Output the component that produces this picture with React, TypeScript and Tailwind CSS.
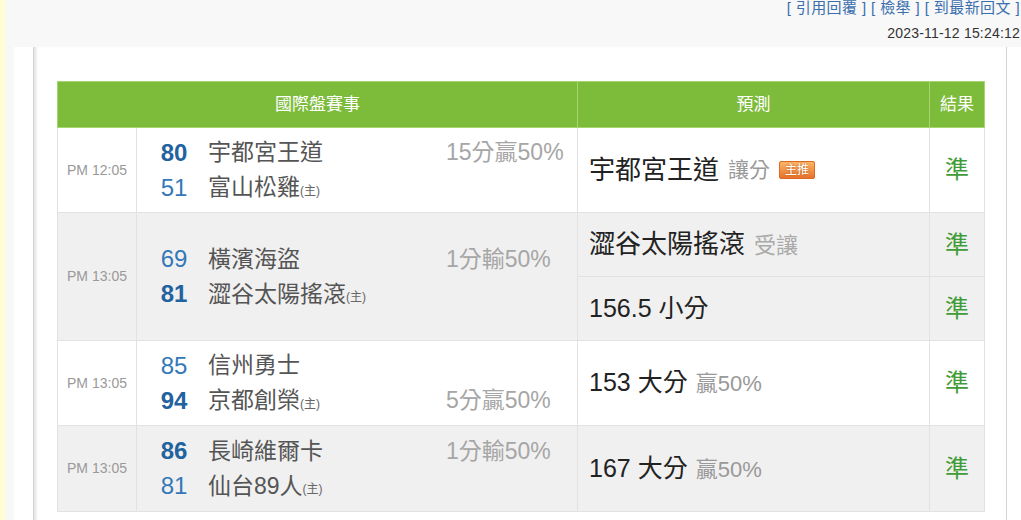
import React from "react";

const FONT = "font-['Liberation_Sans','Noto_Sans_CJK_TC',sans-serif]";

type Line = { score: string; bold: boolean; name: string; home?: boolean; hc?: string };

function Teams({ lines }: { lines: Line[] }) {
  return (
    <div className="flex flex-col pl-[12px] pr-[13px]">
      {lines.map((l, i) => (
        <div key={i} className="flex items-center h-[35px]">
          <div
            className={
              "w-[50px] text-center text-[24px] " +
              (l.bold ? "font-bold text-[#22629e]" : "text-[#3478b8]")
            }
          >
            {l.score}
          </div>
          <div className="ml-[9px] w-[238px] text-[23px] text-[#555] flex items-end">
            {l.name}
            {l.home && <span className="text-[12px] text-[#666] mb-[5px]">(主)</span>}
          </div>
          {l.hc && <div className="text-[23px] text-[#a6a6a6] whitespace-nowrap">{l.hc}</div>}
        </div>
      ))}
    </div>
  );
}

function Result() {
  return <div className="text-center text-[24px] text-[#3f9c36]">準</div>;
}

export default function App() {
  const td = "border border-[#e2e2e2] align-middle p-0";
  return (
    <div className={"flex w-[1021px] h-[520px] overflow-hidden bg-[#f8f8f8] " + FONT}>
      <div className="w-[6px] h-full bg-[#fffdd2]" />
      <div className="flex-1 flex flex-col">
        <div className="h-[47px] flex flex-col items-end pr-[1px]">
          <div className="text-[15px] leading-[16px] text-[#3a6fae] tracking-[0.4px]">
            [ 引用回覆 ] [ 檢舉 ] [ 到最新回文 ]
          </div>
          <div className="text-[14px] leading-[16px] text-[#333] mt-[9px] tracking-[0.2px]">2023-11-12 15:24:12</div>
        </div>
        <div className="flex-1 bg-white ml-[9px] pl-[19px] pr-[14px] flex">
          <div className="flex-1 border-l border-r border-[#d4d4d4] shadow-[inset_4px_0_3px_-2px_rgba(0,0,0,0.12)] pl-[23px] pr-[21px] pt-[34px]">
            <table className="border-collapse table-fixed w-[927px]">
              <colgroup>
                <col className="w-[79px]" />
                <col className="w-[441px]" />
                <col className="w-[352px]" />
                <col className="w-[55px]" />
              </colgroup>
              <thead>
                <tr className="h-[46px] bg-[#7dbb3b] text-white text-[17px] font-normal">
                  <th colSpan={2} className="border border-[#a7d66f] font-normal">國際盤賽事</th>
                  <th className="border border-[#a7d66f] font-normal">預測</th>
                  <th className="border border-[#a7d66f] font-normal">結果</th>
                </tr>
              </thead>
              <tbody>
                <tr className="h-[85px] bg-white">
                  <td className={td + " text-center text-[14px] text-[#999]"}>PM 12:05</td>
                  <td className={td}>
                    <Teams
                      lines={[
                        { score: "80", bold: true, name: "宇都宮王道", hc: "15分贏50%" },
                        { score: "51", bold: false, name: "富山松雞", home: true },
                      ]}
                    />
                  </td>
                  <td className={td + " pl-[11px]"}>
                    <div className="flex items-center">
                      <span className="text-[26px] text-[#222]">宇都宮王道</span>
                      <span className="text-[21px] text-[#999] ml-[9px]">讓分</span>
                      <span className="ml-[9px] w-[36px] h-[18px] flex items-center justify-center rounded-[2px] border border-[#dc6a22] bg-linear-to-b from-[#fbb466] to-[#e6722a] text-white text-[12px] leading-none [text-shadow:0_0_2px_rgba(150,60,0,0.7)]">
                        主推
                      </span>
                    </div>
                  </td>
                  <td className={td}>
                    <Result />
                  </td>
                </tr>
                <tr className="h-[64px] bg-[#f0f0f0]">
                  <td rowSpan={2} className={td + " text-center text-[14px] text-[#999]"}>PM 13:05</td>
                  <td rowSpan={2} className={td}>
                    <Teams
                      lines={[
                        { score: "69", bold: false, name: "橫濱海盜", hc: "1分輸50%" },
                        { score: "81", bold: true, name: "澀谷太陽搖滾", home: true },
                      ]}
                    />
                  </td>
                  <td className={td + " pl-[11px]"}>
                    <span className="text-[26px] text-[#222]">澀谷太陽搖滾</span>
                    <span className="text-[22px] text-[#aaa] ml-[9px]">受讓</span>
                  </td>
                  <td className={td}>
                    <Result />
                  </td>
                </tr>
                <tr className="h-[64px] bg-[#f0f0f0]">
                  <td className={td + " pl-[11px]"}>
                    <span className="text-[25px] text-[#222]">156.5 小分</span>
                  </td>
                  <td className={td}>
                    <Result />
                  </td>
                </tr>
                <tr className="h-[85px] bg-white">
                  <td className={td + " text-center text-[14px] text-[#999]"}>PM 13:05</td>
                  <td className={td}>
                    <Teams
                      lines={[
                        { score: "85", bold: false, name: "信州勇士" },
                        { score: "94", bold: true, name: "京都創榮", home: true, hc: "5分贏50%" },
                      ]}
                    />
                  </td>
                  <td className={td + " pl-[11px]"}>
                    <span className="text-[25px] text-[#222]">153 大分</span>
                    <span className="text-[22px] text-[#999] ml-[8px]">贏50%</span>
                  </td>
                  <td className={td}>
                    <Result />
                  </td>
                </tr>
                <tr className="h-[86px] bg-[#f0f0f0]">
                  <td className={td + " text-center text-[14px] text-[#999]"}>PM 13:05</td>
                  <td className={td}>
                    <Teams
                      lines={[
                        { score: "86", bold: true, name: "長崎維爾卡", hc: "1分輸50%" },
                        { score: "81", bold: false, name: "仙台89人", home: true },
                      ]}
                    />
                  </td>
                  <td className={td + " pl-[11px]"}>
                    <span className="text-[25px] text-[#222]">167 大分</span>
                    <span className="text-[22px] text-[#999] ml-[8px]">贏50%</span>
                  </td>
                  <td className={td}>
                    <Result />
                  </td>
                </tr>
              </tbody>
            </table>
          </div>
        </div>
      </div>
    </div>
  );
}
